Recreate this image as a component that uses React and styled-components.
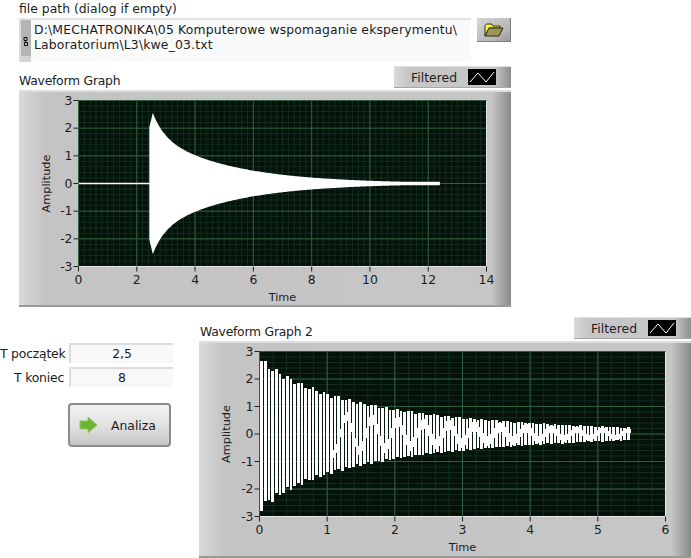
import React from "react"
import styled, {createGlobalStyle} from "styled-components"

const GlobalStyle = createGlobalStyle`
  html, body {
    margin: 0;
    background: #ffffff;
  }
  body {
    font-family: "DejaVu Sans", Verdana, sans-serif;
    font-size: 12.4px;
    color: #1c1c1c;
  }
`

const Page = styled.div`
  width: 691px;
  height: 558px;
  overflow: hidden;
`

const TopSection = styled.div`
  width: 492px;
  margin-left: 19px;
`

const Label = styled.div`
  height: 18px;
  line-height: 18px;
  white-space: nowrap;
`

const PathRow = styled.div`
  display: flex;
  align-items: flex-start;
  gap: 6px;
  margin-bottom: 4px;
`

const PathBox = styled.div`
  width: 452px;
  height: 44px;
  box-sizing: border-box;
  display: flex;
  background: #fafafa;
  border-top: 2px solid #e2e2e2;
  border-left: 2px solid #dcdcdc;
`

const PathGrip = styled.div`
  width: 10px;
  display: flex;
  align-items: center;
  justify-content: center;
  background: linear-gradient(to bottom, #b4b4b4 0 86%, #d4d4d4 86%);
`

const PathText = styled.div`
  padding: 2px 0 0 3px;
  line-height: 15px;
  letter-spacing: 0.16px;
  white-space: pre;
`

const BrowseButton = styled.div`
  width: 34px;
  height: 24px;
  display: flex;
  align-items: center;
  justify-content: center;
  background: linear-gradient(to bottom right, #d6d6d6, #b6b6b6 70%, #989898);
  border-right: 1px solid #808080;
  border-bottom: 1px solid #808080;
  box-sizing: border-box;
`

const GraphHead = styled.div`
  height: 22px;
  margin-bottom: 2px;
  display: flex;
  align-items: flex-end;
  justify-content: space-between;
`

const GraphTitle = styled.div`
  height: 15px;
  line-height: 15px;
  letter-spacing: -0.25px;
  margin-left: ${p => p.$indent || 0}px;
`

const Legend = styled.div`
  width: 117px;
  height: 22px;
  box-sizing: border-box;
  display: flex;
  align-items: center;
  justify-content: flex-end;
  gap: 11px;
  padding-right: 15px;
  background: linear-gradient(to right, #dadada, #c6c6c6 12%, #c8c8c8 86%, #8e8e8e);
  border-top: 1px solid #e0e0e0;
  border-bottom: 1px solid #a8a8a8;
`

const LegendSwatch = styled.svg`
  display: block;
  width: 28px;
  height: 16px;
  background: #000000;
`

const GraphPanel = styled.div`
  width: 492px;
  height: 217px;
  box-sizing: border-box;
  background: linear-gradient(to right, #dadada, #c4c4c4 5%, #c6c6c6 96%, #8a8a8a);
  border-top: 2px solid #dedede;
  border-bottom: 2px solid #9a9a9a;
`

const PlotSvg = styled.svg`
  display: block;
  margin-top: -2px;
  width: 492px;
`

const AxisText = styled.text`
  font-family: "DejaVu Sans", Verdana, sans-serif;
  font-size: 12.4px;
  fill: #1c1c1c;
`

const AxisTitle = styled(AxisText)`
  font-size: 11.3px;
`

const LowerSection = styled.div`
  margin-top: 10px;
  display: flex;
`

const ControlColumn = styled.div`
  width: 199px;
  padding-top: 26px;
  box-sizing: border-box;
`

const FieldRow = styled.div`
  display: grid;
  grid-template-columns: 64px 104px;
  column-gap: 5px;
  height: 20px;
  margin-bottom: 4px;
  align-items: center;
`

const FieldLabel = styled.div`
  text-align: right;
  letter-spacing: -0.2px;
  white-space: nowrap;
`

const FieldValue = styled.div`
  height: 20px;
  line-height: 18px;
  box-sizing: border-box;
  text-align: center;
  background: #f8f8f8;
  border-top: 2px solid #dcdcdc;
  border-left: 2px solid #dcdcdc;
`

const RunButton = styled.div`
  width: 103px;
  height: 44px;
  margin: 16px 0 0 68px;
  box-sizing: border-box;
  display: flex;
  align-items: center;
  gap: 13px;
  padding-left: 9px;
  border: 2px solid #8c8c8c;
  border-radius: 4px;
  background: linear-gradient(to bottom, #f2f2f2, #e2e2e2 50%, #c6c6c6);
`

const GraphColumn = styled.div`
  width: 492px;
`

const buildPath = (fn, from, to, step, toX, toY) => {
  const points = []
  for (let t = from; t <= to; t += step) {
    points.push(`${toX(t).toFixed(2)},${toY(fn(t)).toFixed(2)}`)
  }
  return points.join(" ")
}

const range = (from, to, step) => {
  const out = []
  for (let i = 0; from + i * step <= to + 1e-9; i++) out.push(from + i * step)
  return out
}

const Chart = ({plot, xMax, xStep, children}) => {
  const toX = t => plot.x + (t / xMax) * plot.w
  const toY = a => plot.y + ((3 - a) / 6) * plot.h
  const bottom = plot.y + plot.h
  return (
    <PlotSvg height={217} viewBox="0 0 492 217">
      <rect x={plot.x} y={plot.y} width={plot.w} height={plot.h} fill="#04120a" />
      {range(0, xMax, 0.2).map(v => (
        <line key={v} x1={toX(v)} x2={toX(v)} y1={plot.y} y2={bottom} stroke="#132c1d" strokeWidth="1" />
      ))}
      {range(-3, 3, 0.2).map(v => (
        <line key={v} y1={toY(v)} y2={toY(v)} x1={plot.x} x2={plot.x + plot.w} stroke="#132c1d" strokeWidth="1" />
      ))}
      {range(0, xMax, xStep).map(v => (
        <line key={v} x1={toX(v)} x2={toX(v)} y1={plot.y} y2={bottom} stroke="#2f6040" strokeWidth="1" />
      ))}
      {range(-3, 3, 1).map(v => (
        <line key={v} y1={toY(v)} y2={toY(v)} x1={plot.x} x2={plot.x + plot.w} stroke="#2f6040" strokeWidth="1" />
      ))}
      {children(toX, toY)}
      <path d={`M${plot.x + plot.w} ${plot.y}V${bottom}H${plot.x}`} fill="none" stroke="#e8e8e8" strokeWidth="1" />
      {range(-3, 3, 1).map(v => (
        <g key={v}>
          <line x1={plot.x - 5} x2={plot.x} y1={toY(v)} y2={toY(v)} stroke="#222222" />
          <AxisText x={plot.x - 6} y={toY(v) + 4} textAnchor="end">{Math.round(v)}</AxisText>
        </g>
      ))}
      {range(0, xMax, xStep).map(v => (
        <g key={v}>
          <line x1={toX(v)} x2={toX(v)} y1={bottom} y2={bottom + 5} stroke="#222222" />
          <AxisText x={toX(v)} y={bottom + 17} textAnchor="middle">{Math.round(v)}</AxisText>
        </g>
      ))}
      <AxisTitle x={plot.x + plot.w / 2} y={bottom + 34} textAnchor="middle">Time</AxisTitle>
      <AxisTitle
        transform={`translate(31 ${plot.y + plot.h / 2}) rotate(-90)`}
        textAnchor="middle"
      >
        Amplitude
      </AxisTitle>
    </PlotSvg>
  )
}

const FilteredLegend = () => (
  <Legend>
    Filtered
    <LegendSwatch viewBox="0 0 28 16">
      <polyline points="2,13 10,4 18,13 26,3" fill="none" stroke="#ffffff" strokeWidth="1" />
    </LegendSwatch>
  </Legend>
)

const envelopeOne = t => Math.max(0.06, 1.75 * Math.exp(-(t - 2.55) / 2.6) + 0.8 * Math.exp(-(t - 2.55) / 0.4))
const envelopeTwo = t => 1.86 * Math.exp(-t / 2.65) + 0.94 * Math.exp(-t / 0.69)

const RawSignal = (toX, toY) => {
  const upper = buildPath(envelopeOne, 2.55, 12.45, 0.05, toX, toY)
  const lower = buildPath(t => -envelopeOne(t), 2.55, 12.45, 0.05, toX, toY).split(" ").reverse().join(" ")
  const lead = `${toX(2.43)},${toY(0)} ${toX(2.43)},${toY(2.03)}`
  const tail = `${toX(2.43)},${toY(-2.03)}`
  return (
    <>
      <line x1={toX(0)} x2={toX(2.45)} y1={toY(0)} y2={toY(0)} stroke="#ffffff" strokeWidth="1.5" />
      <polygon points={`${lead} ${upper} ${lower} ${tail}`} fill="#ffffff" />
    </>
  )
}

// white bars on whole pixels with 1px dark gaps, later gaps get bridged in places
const CutSignal = (toX, toY) => {
  const pxPerUnit = toX(1) - toX(0)
  const bars = []
  let x = Math.round(toX(0))
  const end = toX(5.47)
  for (let i = 0; x < end; i++) {
    const step = i % 3 === 2 ? 3 : 4
    const t = (x - toX(0)) / pxPerUnit
    const env = envelopeTwo(t)
    const top = env * (0.95 + 0.05 * Math.sin(i * 1.9))
    const low = env * (0.95 + 0.05 * Math.cos(i * 2.3))
    const reach = Math.min(0.35, t * 0.1)
    const mid = env * 0.5 * Math.sin(i * 0.9)
    bars.push(
      <g key={i} shapeRendering="crispEdges" fill="#ffffff">
        <rect x={x} y={toY(top)} width={step - 1} height={toY(-low) - toY(top)} />
        {reach > 0.1 && (
          <rect x={x + step - 1} y={toY(mid + env * reach)} width={1} height={toY(-env * reach) - toY(env * reach)} />
        )}
      </g>
    )
    x += step
  }
  return bars
}

const App = () => {
  return (
    <Page>
      <GlobalStyle />
      <TopSection>
        <Label>file path (dialog if empty)</Label>
        <PathRow>
          <PathBox>
            <PathGrip>
              <svg width="6" height="11" viewBox="0 0 6 11">
                <path d="M1 1.5h3v3h-3zM2.5 4.5v2M1.5 6.5h3v3h-3z" fill="none" stroke="#111111" strokeWidth="1" />
              </svg>
            </PathGrip>
            <PathText>{"D:\\MECHATRONIKA\\05 Komputerowe wspomaganie eksperymentu\\\nLaboratorium\\L3\\kwe_03.txt"}</PathText>
          </PathBox>
          <BrowseButton>
            <svg width="20" height="14" viewBox="0 0 20 14">
              <path d="M1 13V2.5L2.5 1h5L9 3h7v2H5L1 13z" fill="#faf24a" stroke="#2e2e10" strokeWidth="1" />
              <path d="M1 13L5 5h14l-4 8H1z" fill="#9a9658" stroke="#2e2e10" strokeWidth="1" />
            </svg>
          </BrowseButton>
        </PathRow>
        <GraphHead>
          <GraphTitle>Waveform Graph</GraphTitle>
          <FilteredLegend />
        </GraphHead>
        <GraphPanel>
          <Chart plot={{x: 59.5, y: 10.5, w: 408, h: 166}} xMax={14} xStep={2}>
            {RawSignal}
          </Chart>
        </GraphPanel>
      </TopSection>
      <LowerSection>
        <ControlColumn>
          <FieldRow>
            <FieldLabel>T początek</FieldLabel>
            <FieldValue>2,5</FieldValue>
          </FieldRow>
          <FieldRow>
            <FieldLabel>T koniec</FieldLabel>
            <FieldValue>8</FieldValue>
          </FieldRow>
          <RunButton>
            <svg width="19" height="18" viewBox="0 0 19 18">
              <path d="M1 5h8V1l9 8-9 8v-4H1z" fill="#6cb52c" stroke="#8fc56a" strokeWidth="1" />
            </svg>
            Analiza
          </RunButton>
        </ControlColumn>
        <GraphColumn>
          <GraphHead>
            <GraphTitle $indent={1}>Waveform Graph 2</GraphTitle>
            <FilteredLegend />
          </GraphHead>
          <GraphPanel>
            <Chart plot={{x: 60.5, y: 10.5, w: 406, h: 165}} xMax={6} xStep={1}>
              {CutSignal}
            </Chart>
          </GraphPanel>
        </GraphColumn>
      </LowerSection>
    </Page>
  )
}

export default App
